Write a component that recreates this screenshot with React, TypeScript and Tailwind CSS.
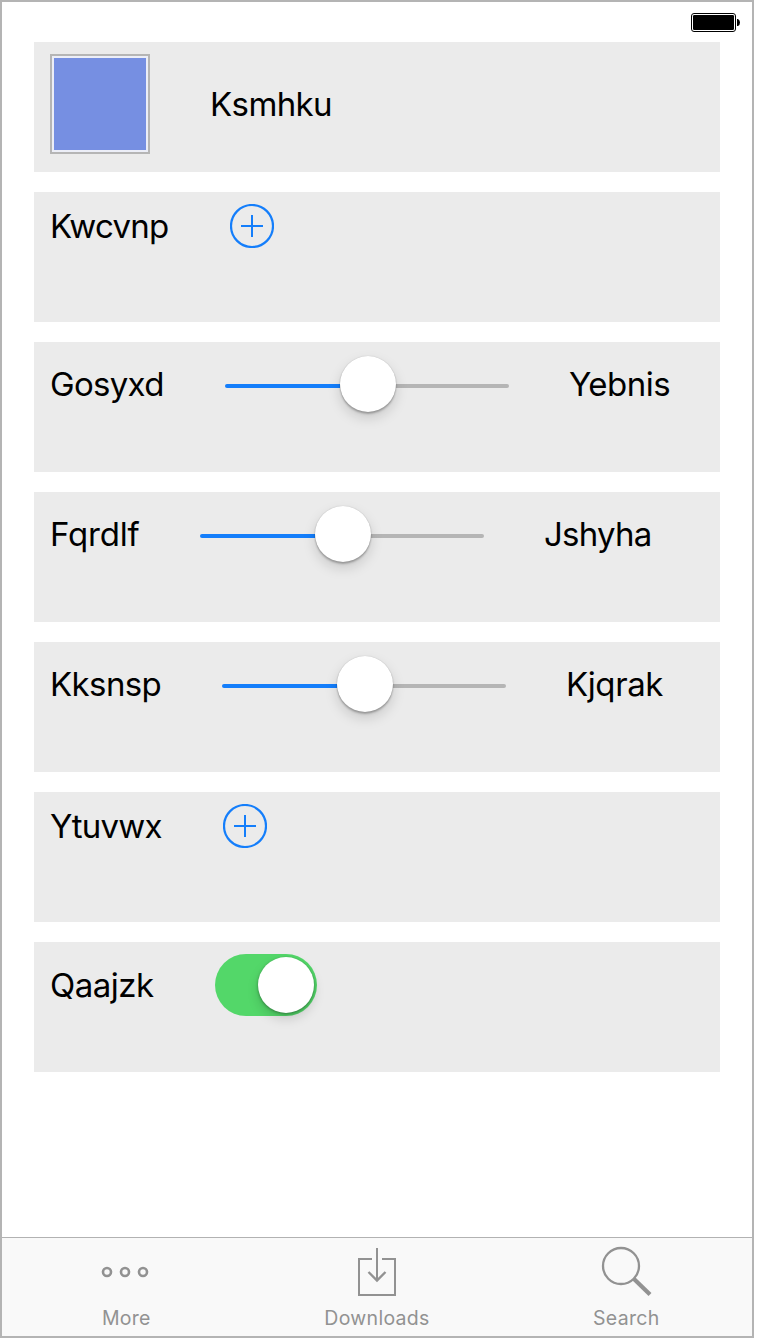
import React from "react";

function Card({ children }: { children: React.ReactNode }) {
  return (
    <section className="flex h-[130px] shrink-0 items-start bg-[#ebebeb] px-4 pt-3">
      <div className="flex items-center gap-[60px]">{children}</div>
    </section>
  );
}

function Label({ text, className }: { text: string; className: string }) {
  return (
    <span className={`block whitespace-nowrap text-[33px] leading-[40px] text-black ${className}`}>
      {text}
    </span>
  );
}

function AddButton() {
  return (
    <button type="button" aria-label="Add" className="block size-11">
      <svg viewBox="0 0 44 44" className="block size-11" fill="none" stroke="#147efb" strokeWidth="2">
        <circle cx="22" cy="22" r="21" strokeWidth="2.2" />
        <path d="M11 22H33M22 11V33" />
      </svg>
    </button>
  );
}

function Slider() {
  return (
    <div className="flex h-[62px] w-[284px] items-center pt-0.5">
      <div className="h-1 w-[115px] rounded-l-full bg-[#147efb]" />
      <div className="z-10 mb-1 size-14 rounded-full bg-white shadow-[0_0_1px_rgba(0,0,0,0.25),0_2px_2px_rgba(0,0,0,0.25),0_6px_13px_rgba(0,0,0,0.15)]" />
      <div className="h-1 w-[113px] rounded-r-full bg-[#b5b5b5]" />
    </div>
  );
}

function Toggle() {
  return (
    <button
      type="button"
      role="switch"
      aria-checked="true"
      className="flex h-[62px] w-[102px] items-center justify-end rounded-full bg-[#53d769] pr-[3px]"
    >
      <span className="block size-14 rounded-full bg-white shadow-[0_1px_3px_rgba(0,0,0,0.35),0_6px_12px_rgba(0,0,0,0.15)]" />
    </button>
  );
}

function Tab({ label, className, children }: { label: string; className: string; children: React.ReactNode }) {
  return (
    <button type="button" className="flex flex-1 flex-col items-center pt-2 text-[#929292]">
      <svg width="60" height="60" viewBox="0 0 60 60" className="block" fill="none" stroke="currentColor">
        {children}
      </svg>
      <span className={`block text-[19.5px] leading-6 ${className}`}>{label}</span>
    </button>
  );
}

export default function App() {
  return (
    <div className="h-[1340px] w-[760px] bg-white font-['Inter',sans-serif]">
      <main className="flex h-[1338px] w-[754px] flex-col border-2 border-[#b4b4b4] bg-white">
        <header className="flex h-10 shrink-0 items-start justify-end pr-3 pt-[11px]">
          <svg width="49" height="19" viewBox="0 0 49 19" className="block">
            <rect x="0.5" y="0.5" width="44" height="18" rx="2.5" fill="white" stroke="black" />
            <rect x="2" y="2" width="41" height="15" rx="1.2" fill="black" />
            <path d="M46 6H47Q49 7 49 9.5Q49 12 47 13H46Z" fill="black" />
          </svg>
        </header>

        <div className="flex flex-1 flex-col gap-5 px-8">
          <Card>
            <div className="size-[100px] border-2 border-[#b5b5b5] bg-[#eceef7] p-0.5">
              <div className="size-full bg-[#768fe2]" />
            </div>
            <Label text="Ksmhku" className="w-[122px] tracking-[-0.6px]" />
          </Card>
          <Card>
            <Label text="Kwcvnp" className="w-[120px] tracking-[-0.75px]" />
            <AddButton />
          </Card>
          <Card>
            <Label text="Gosyxd" className="mb-0.5 w-[115px] tracking-[-0.7px]" />
            <Slider />
            <Label text="Yebnis" className="mb-0.5 w-[102px] tracking-[-0.5px]" />
          </Card>
          <Card>
            <Label text="Fqrdlf" className="mb-0.5 w-[90px] tracking-[-0.2px]" />
            <Slider />
            <Label text="Jshyha" className="mb-0.5 w-[108px] tracking-[-0.75px]" />
          </Card>
          <Card>
            <Label text="Kksnsp" className="mb-0.5 w-[112px] tracking-[-0.6px]" />
            <Slider />
            <Label text="Kjqrak" className="mb-0.5 w-[98px] tracking-[-0.4px]" />
          </Card>
          <Card>
            <Label text="Ytuvwx" className="w-[113px] tracking-[-0.75px]" />
            <AddButton />
          </Card>
          <Card>
            <Label text="Qaajzk" className="w-[105px] tracking-[-0.5px]" />
            <Toggle />
          </Card>
        </div>

        <nav className="flex h-[99px] shrink-0 border-t border-[#b2b2b2] bg-[#f9f9f9]">
          <Tab label="More" className="pr-[1.5px] tracking-[0.2px]">
            <g strokeWidth="2.6">
              <circle cx="10" cy="26" r="4" />
              <circle cx="28" cy="26" r="4" />
              <circle cx="46" cy="26" r="4" />
            </g>
          </Tab>
          <Tab label="Downloads" className="tracking-[0.3px]">
            <path d="M25 13H12V49H48V13H35M30 2V35" strokeWidth="2" />
            <path d="M21.5 26L30 34.5L38.5 26" strokeWidth="2.4" />
          </Tab>
          <Tab label="Search" className="pr-[1.5px] tracking-[0.3px]">
            <circle cx="24" cy="20" r="18" strokeWidth="2.3" />
            <path d="M36.5 32.5L53 48.5" strokeWidth="4.2" />
          </Tab>
        </nav>
      </main>
    </div>
  );
}
